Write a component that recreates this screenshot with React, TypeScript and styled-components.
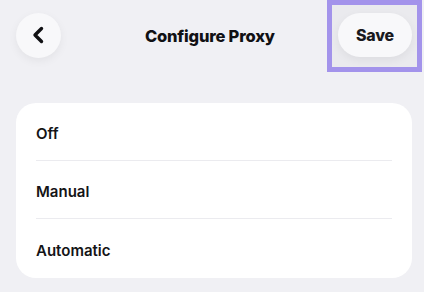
import React from "react";
import styled, { createGlobalStyle } from "styled-components";

const Global = createGlobalStyle`
  html, body { margin: 0; padding: 0; background: #f0f0f4; }
  body { font-family: Inter, "Noto Sans", Arial, sans-serif; color: #111114; }
  * { box-sizing: border-box; }
`;

const Page = styled.div`
  width: 424px;
  height: 292px;
  background: #f0f0f4;
  display: flex;
  flex-direction: column;
  overflow: hidden;
`;

const Header = styled.header`
  height: 72px;
  display: flex;
  align-items: center;
  padding: 0 2px 0 16px;
`;

const BackButton = styled.button`
  width: 45px;
  height: 45px;
  margin-top: -2px;
  border-radius: 50%;
  border: none;
  background: #f8f8fa;
  box-shadow: 0 3px 10px rgba(0, 0, 0, 0.06);
  display: flex;
  align-items: center;
  justify-content: center;
  padding: 0 2px 0 0;
`;

const Title = styled.h1`
  margin: -1px 0 0 84px;
  font-size: 16.5px;
  font-weight: 800;
  letter-spacing: -0.2px;
  flex: 1;
`;

const Highlight = styled.div`
  width: 95px;
  height: 72px;
  border: 5px solid #a393eb;
  background: #eaeaee;
  padding: 8px 5px 10px 6px;
  display: flex;
`;

const SaveButton = styled.button`
  width: 74px;
  height: 44px;
  border-radius: 22px;
  border: none;
  background: #f8f8fa;
  box-shadow: 0 3px 10px rgba(0, 0, 0, 0.06);
  font-family: inherit;
  font-size: 16px;
  font-weight: 800;
  letter-spacing: -0.2px;
  color: #1a1a1e;
  padding: 0;
`;

const Card = styled.section`
  margin: 31px 12px 0 16px;
  background: #ffffff;
  border-radius: 20px;
  display: flex;
  flex-direction: column;
`;

const Row = styled.div<{ $last?: boolean }>`
  height: ${(p) => (p.$last ? 59 : 58)}px;
  margin: 0 20px;
  padding-top: 3px;
  display: flex;
  align-items: center;
  border-bottom: ${(p) => (p.$last ? "none" : "1.5px solid #ebebef")};
  font-size: 15px;
  font-weight: 600;
  color: #141416;
`;

const options = ["Off", "Manual", "Automatic"];

export default function App() {
  return (
    <Page>
      <Global />
      <Header>
        <BackButton aria-label="Back">
          <svg width="14" height="18" viewBox="0 0 14 18" fill="none">
            <path
              d="M10.5 2.5 L4 9 L10.5 15.5"
              stroke="#111114"
              strokeWidth="3.4"
              strokeLinecap="round"
              strokeLinejoin="round"
            />
          </svg>
        </BackButton>
        <Title>Configure Proxy</Title>
        <Highlight>
          <SaveButton>Save</SaveButton>
        </Highlight>
      </Header>
      <Card>
        {options.map((o, i) => (
          <Row key={o} $last={i === options.length - 1}>
            {o}
          </Row>
        ))}
      </Card>
    </Page>
  );
}
